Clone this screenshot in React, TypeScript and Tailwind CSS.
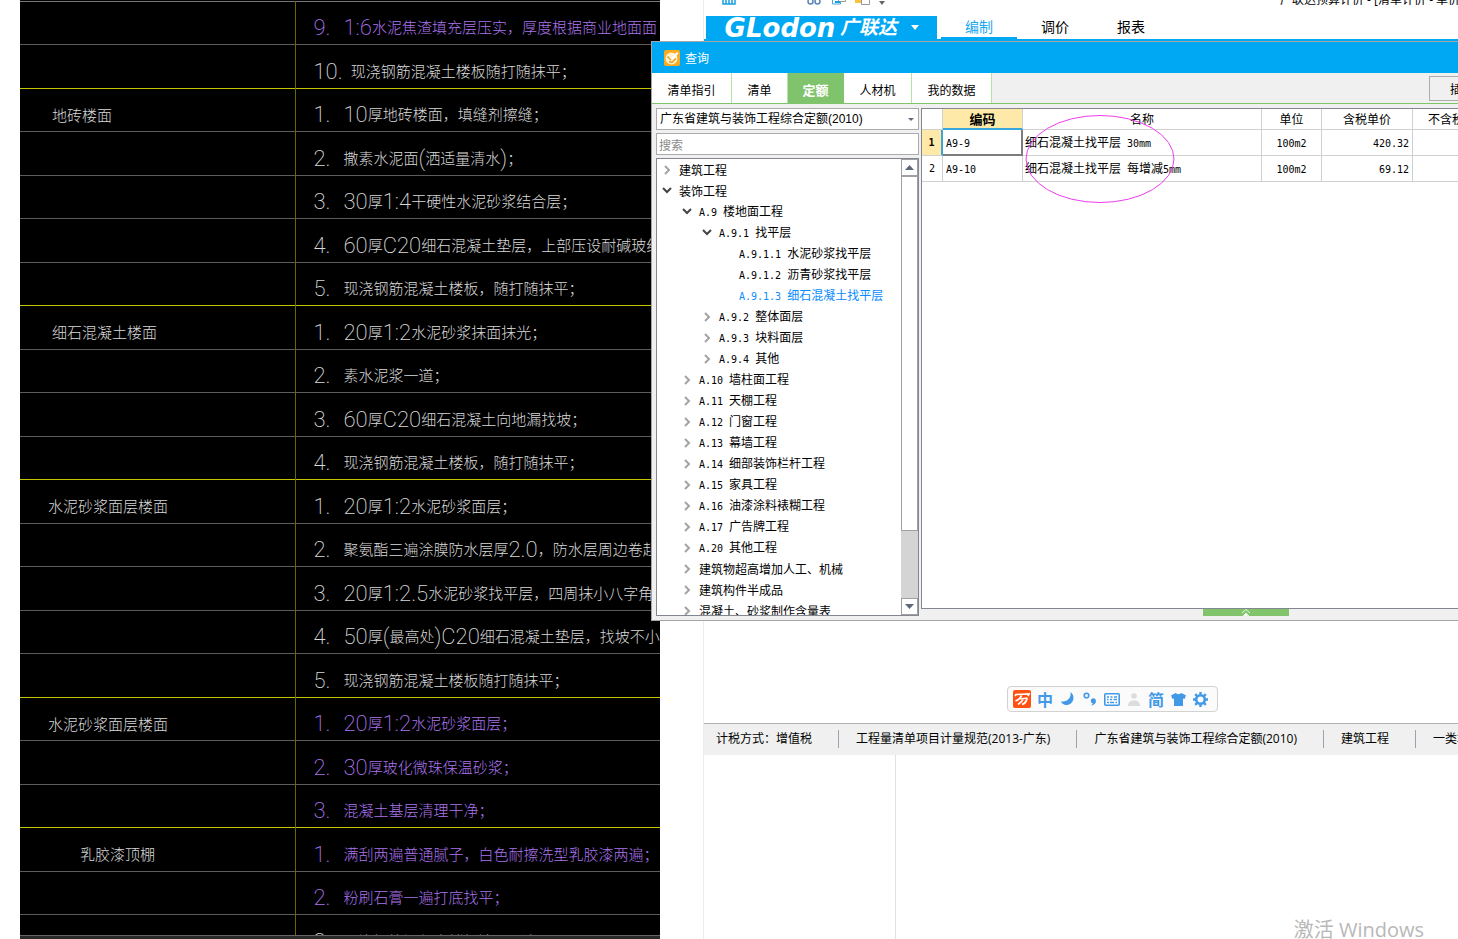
import { useState } from "react";
import { clsx } from "clsx";

type CadRow = {
  no: string;
  text: string;
  name?: string;
  namePad?: string;
  purple?: boolean;
  endsGroup?: boolean;
};

const cadRows: CadRow[] = [
  { no: "9.", text: "1:6水泥焦渣填充层压实，厚度根据商业地面面", purple: true },
  { no: "10.", text: "现浇钢筋混凝土楼板随打随抹平；", endsGroup: true },
  { no: "1.", text: "10厚地砖楼面，填缝剂擦缝；", name: "地砖楼面", namePad: "pl-8" },
  { no: "2.", text: "撒素水泥面(洒适量清水)；" },
  { no: "3.", text: "30厚1:4干硬性水泥砂浆结合层；" },
  { no: "4.", text: "60厚C20细石混凝土垫层，上部压设耐碱玻纤" },
  { no: "5.", text: "现浇钢筋混凝土楼板，随打随抹平；", endsGroup: true },
  { no: "1.", text: "20厚1:2水泥砂浆抹面抹光；", name: "细石混凝土楼面", namePad: "pl-8" },
  { no: "2.", text: "素水泥浆一道；" },
  { no: "3.", text: "60厚C20细石混凝土向地漏找坡；" },
  { no: "4.", text: "现浇钢筋混凝土楼板，随打随抹平；", endsGroup: true },
  { no: "1.", text: "20厚1:2水泥砂浆面层；", name: "水泥砂浆面层楼面", namePad: "pl-7" },
  { no: "2.", text: "聚氨酯三遍涂膜防水层厚2.0，防水层周边卷起" },
  { no: "3.", text: "20厚1:2.5水泥砂浆找平层，四周抹小八字角" },
  { no: "4.", text: "50厚(最高处)C20细石混凝土垫层，找坡不小" },
  { no: "5.", text: "现浇钢筋混凝土楼板随打随抹平；", endsGroup: true },
  { no: "1.", text: "20厚1:2水泥砂浆面层；", name: "水泥砂浆面层楼面", namePad: "pl-7", purple: true },
  { no: "2.", text: "30厚玻化微珠保温砂浆；", purple: true },
  { no: "3.", text: "混凝土基层清理干净；", purple: true, endsGroup: true },
  { no: "1.", text: "满刮两遍普通腻子，白色耐擦洗型乳胶漆两遍；", name: "乳胶漆顶棚", namePad: "pl-[60px]", purple: true },
  { no: "2.", text: "粉刷石膏一遍打底找平；", purple: true },
  { no: "3.", text: "现浇钢筋混凝土楼板清理干净" },
];

type TreeNode = { label: string; level: number; state?: "open" | "closed" };

const treeNodes: TreeNode[] = [
  { label: "建筑工程", level: 0, state: "closed" },
  { label: "装饰工程", level: 0, state: "open" },
  { label: "A.9 楼地面工程", level: 1, state: "open" },
  { label: "A.9.1 找平层", level: 2, state: "open" },
  { label: "A.9.1.1 水泥砂浆找平层", level: 3 },
  { label: "A.9.1.2 沥青砂浆找平层", level: 3 },
  { label: "A.9.1.3 细石混凝土找平层", level: 3 },
  { label: "A.9.2 整体面层", level: 2, state: "closed" },
  { label: "A.9.3 块料面层", level: 2, state: "closed" },
  { label: "A.9.4 其他", level: 2, state: "closed" },
  { label: "A.10 墙柱面工程", level: 1, state: "closed" },
  { label: "A.11 天棚工程", level: 1, state: "closed" },
  { label: "A.12 门窗工程", level: 1, state: "closed" },
  { label: "A.13 幕墙工程", level: 1, state: "closed" },
  { label: "A.14 细部装饰栏杆工程", level: 1, state: "closed" },
  { label: "A.15 家具工程", level: 1, state: "closed" },
  { label: "A.16 油漆涂料裱糊工程", level: 1, state: "closed" },
  { label: "A.17 广告牌工程", level: 1, state: "closed" },
  { label: "A.20 其他工程", level: 1, state: "closed" },
  { label: "建筑物超高增加人工、机械", level: 1, state: "closed" },
  { label: "建筑构件半成品", level: 1, state: "closed" },
  { label: "混凝土、砂浆制作含量表", level: 1, state: "closed" },
];

const levelPad = ["pl-1", "pl-6", "pl-11", "pl-16"];

const quotaRows = [
  { code: "A9-9", name: "细石混凝土找平层 30mm", unit: "100m2", price: "420.32" },
  { code: "A9-10", name: "细石混凝土找平层 每增减5mm", unit: "100m2", price: "69.12" },
];

const queryTabs = [
  { label: "清单指引", width: "w-20" },
  { label: "清单", width: "w-14" },
  { label: "定额", width: "w-14" },
  { label: "人材机", width: "w-[68px]" },
  { label: "我的数据", width: "w-20" },
];

const statusItems = [
  "计税方式：增值税",
  "工程量清单项目计量规范(2013-广东)",
  "广东省建筑与装饰工程综合定额(2010)",
  "建筑工程",
  "一类地区",
];

// Latin runs get their own face and size, Chinese keeps the parent's
function Mixed({ text, latin }: { text: string; latin: string }) {
  return (
    <>
      {text.split(/([\x20-\x7e]+)/).map((part, i) =>
        i % 2 === 1 ? (
          <span key={i} className={clsx("whitespace-pre", latin)}>
            {part}
          </span>
        ) : (
          part
        ),
      )}
    </>
  );
}

const monoLatin = "font-['DejaVu_Sans_Mono',monospace] text-[10px]";
const cadLatin = "align-[-2px] font-['Roboto',sans-serif] text-[22px] font-extralight";

function CadDrawing() {
  return (
    <section className="relative ml-5 w-[640px] shrink-0 overflow-hidden bg-black pt-px font-['Noto_Sans_CJK_SC',sans-serif] text-[15px] font-light">
      <table className="w-full table-fixed border-collapse">
        <colgroup>
          <col className="w-[275px]" />
          <col />
        </colgroup>
        <tbody>
          {cadRows.map((row, i) => (
            <tr
              key={i}
              className={clsx(
                "border-b odd:h-[43px] even:h-[44px]",
                i === 0 && "border-t border-t-[#777]",
                row.endsGroup ? "border-b-[#c4c400]" : "border-b-[#5c5c5c]",
              )}
            >
              <td
                className={clsx(
                  "border-r border-r-[#6b6700] p-0 pt-2 leading-none text-[#d8d8d8]",
                  row.namePad,
                )}
              >
                {row.name}
              </td>
              <td className="p-0">
                <div
                  className={clsx(
                    "h-[36px] overflow-hidden whitespace-nowrap pl-[18px] pt-[9px] leading-[26px]",
                    row.purple ? "text-[#ab74ec]" : "text-[#d8d8d8]",
                  )}
                >
                  <span className={clsx("inline-block min-w-[30px] pr-2", cadLatin)}>
                    {row.no}
                  </span>
                  <Mixed text={row.text} latin={cadLatin} />
                </div>
              </td>
            </tr>
          ))}
        </tbody>
      </table>
      <div className="absolute inset-x-0 bottom-0 h-1 border-t border-[#666] bg-[#2a2a2a]" />
    </section>
  );
}

function Chevron({ state }: { state?: "open" | "closed" }) {
  return (
    <span className="flex w-[18px] shrink-0 items-center pl-[1px]">
      {state === "closed" && (
        <svg width="10" height="10" viewBox="0 0 10 10" fill="none" stroke="#a3a3a3" strokeWidth="2">
          <path d="M3 1l4 4-4 4" />
        </svg>
      )}
      {state === "open" && (
        <svg width="10" height="10" viewBox="0 0 10 10" fill="none" stroke="#444" strokeWidth="2">
          <path d="M1 2l4 4 4-4" />
        </svg>
      )}
    </span>
  );
}

function QuotaTree() {
  const [selected, setSelected] = useState("A.9.1.3 细石混凝土找平层");
  return (
    <div className="flex min-h-0 flex-1 overflow-hidden border border-[#828790] bg-white">
      <ul className="min-w-0 flex-1 overflow-hidden">
        {treeNodes.map((node) => (
          <li key={node.label}>
            <button
              type="button"
              onClick={() => setSelected(node.label)}
              className={clsx(
                "flex h-[21px] w-full items-center whitespace-nowrap text-left",
                levelPad[node.level],
                selected === node.label && "text-[#0a8cff]",
              )}
            >
              <Chevron state={node.state} />
              <span>
                <Mixed text={node.label} latin={monoLatin} />
              </span>
            </button>
          </li>
        ))}
      </ul>
      <div className="flex w-[17px] flex-col bg-[#d4d4d4]">
        <button type="button" aria-label="向上" className="flex h-[17px] items-center justify-center border border-[#a0a0a0] bg-white">
          <svg width="9" height="5" viewBox="0 0 9 5"><path d="M4.500 0L9 5H0z" fill="#606878" /></svg>
        </button>
        <div className="h-[355px] border border-[#a0a0a0] bg-white" />
        <button type="button" aria-label="向下" className="mt-auto flex h-[17px] items-center justify-center border border-[#a0a0a0] bg-white">
          <svg width="9" height="5" viewBox="0 0 9 5"><path d="M0 0h9L4.500 5z" fill="#606878" /></svg>
        </button>
      </div>
    </div>
  );
}

function QuotaTable() {
  const cell = "border-b border-r border-[#d0d0d0] p-0";
  return (
    <div className="min-h-0 flex-1 overflow-hidden border border-r-0 border-[#828790] bg-white">
      <table className="w-[582px] table-fixed border-separate border-spacing-0 whitespace-nowrap">
        <colgroup>
          <col className="w-[21px]" />
          <col className="w-20" />
          <col className="w-[239px]" />
          <col className="w-[60px]" />
          <col className="w-[91px]" />
          <col className="w-[91px]" />
        </colgroup>
        <thead>
          <tr className="h-[21px]">
            <th className={cell} />
            <th className="border-b-2 border-r border-b-[#3ba6dc] border-r-[#d0d0d0] bg-[#ffe9a9] p-0 text-[13px] leading-none">编码</th>
            {["名称", "单位", "含税单价", "不含税单价"].map((h) => (
              <th key={h} className={clsx(cell, "font-normal leading-none")}>{h}</th>
            ))}
          </tr>
        </thead>
        <tbody>
          {quotaRows.map((row, i) => (
            <tr key={row.code} className="h-[26px]">
              <td
                className={clsx(
                  "p-0 text-center font-['DejaVu_Sans_Mono',monospace] text-[10px]",
                  i === 0
                    ? "border-b border-r-2 border-b-[#d0d0d0] border-r-[#3ba6dc] bg-[#ffe9a9] font-bold"
                    : "border-b border-r border-[#d0d0d0]",
                )}
              >
                {i + 1}
              </td>
              <td
                className={clsx(
                  "p-0 pl-[3px]",
                  i === 0
                    ? "border-b-2 border-r-2 border-[#7c7c7c]"
                    : "border-b border-r border-[#d0d0d0]",
                )}
              >
                <span className={monoLatin}>{row.code}</span>
              </td>
              <td className={clsx(cell, "pl-0.5")}>
                <Mixed text={row.name} latin={monoLatin} />
              </td>
              <td className={clsx(cell, "text-center")}>
                <span className={monoLatin}>{row.unit}</span>
              </td>
              <td className={clsx(cell, "pr-[3px] text-right")}>
                <span className={monoLatin}>{row.price}</span>
              </td>
              <td className={cell} />
            </tr>
          ))}
        </tbody>
      </table>
    </div>
  );
}

function QueryDialog() {
  const [tab, setTab] = useState("定额");
  return (
    <div className="absolute left-[651px] right-0 top-[41px] flex h-[580px] flex-col overflow-hidden border border-r-0 border-[#a5a5a5] bg-[#f0f0f0] text-xs">
      <header className="flex h-[31px] shrink-0 items-center gap-[5px] bg-[#00a8f3] pl-3 text-white">
        <svg width="16" height="16" viewBox="0 0 16 16">
          <rect width="16" height="16" rx="2" fill="#fbab1d" />
          <circle cx="7.500" cy="8.500" r="6" fill="#fff3d0" />
          <path d="M3.500 6.500l3 3L13.500 3M5 11.500l3 1 4-4" fill="none" stroke="#f39a12" strokeWidth="1.500" />
          <path d="M6 8.500L13 2l1.500 1.500L8 10z" fill="#fff" />
        </svg>
        <h1>查询</h1>
      </header>
      <nav className="flex h-[31px] shrink-0 border-b border-[#7fc36c]">
        {queryTabs.map((t) => (
          <button
            key={t.label}
            type="button"
            onClick={() => setTab(t.label)}
            className={clsx(
              "border-r pt-1",
              t.width,
              t.label === tab
                ? "border-[#7fc36c] bg-[#7fc36c] text-[13px] font-bold text-white"
                : "border-[#b5e3a5] bg-white",
            )}
          >
            {t.label}
          </button>
        ))}
        <button type="button" className="mt-[3px] ml-auto h-[25px] w-[29px] overflow-hidden whitespace-nowrap border border-r-0 border-[#adadad] pl-5 text-left">
          插入
        </button>
      </nav>
      <div className="flex min-h-0 flex-1 gap-0.5 pl-1 pt-1">
        <div className="flex w-[263px] shrink-0 flex-col gap-[3px] pb-1">
          <div className="relative h-[22px] shrink-0">
            <select
              aria-label="定额库"
              className="h-full w-full appearance-none border border-[#ababab] bg-white pl-[3px] font-['Liberation_Sans','Noto_Sans_CJK_SC',sans-serif]"
            >
              <option>广东省建筑与装饰工程综合定额(2010)</option>
            </select>
            <svg className="pointer-events-none absolute right-[5px] top-[10px]" width="6" height="3" viewBox="0 0 6 3">
              <path d="M0 0h6L3 3z" fill="#606878" />
            </svg>
          </div>
          <input
            aria-label="搜索"
            placeholder="搜索"
            className="h-[22px] shrink-0 border border-[#ababab] bg-white px-0.5 placeholder:text-[#8a8a8a]"
          />
          <QuotaTree />
        </div>
        <div className="flex min-w-0 flex-1 flex-col">
          <QuotaTable />
          <div className="h-[11px] shrink-0 pl-[282px]">
            <button type="button" aria-label="展开" className="flex h-[7px] w-[86px] items-center justify-center bg-[#82c46c]">
              <svg width="10" height="7" viewBox="0 0 10 7" fill="none" stroke="#fff">
                <path d="M1 4l4-3.500L9 4M2 7l3-3 3 3" strokeOpacity=".8" />
                <path d="M3.500 7L5 5l1.500 2z" fill="#fff" />
              </svg>
            </button>
          </div>
        </div>
      </div>
      {/* hand-drawn markup around the matching quotas */}
      <svg className="pointer-events-none absolute left-[373px] top-[72px]" width="150" height="90" viewBox="0 0 150 90">
        <ellipse cx="75" cy="45" rx="74" ry="43.500" fill="none" stroke="#ee3cee" />
      </svg>
    </div>
  );
}

function ImeBar() {
  const item = "flex w-[22px] items-center justify-center";
  return (
    <div className="absolute left-[1007px] top-[686px] flex h-[26px] w-[211px] items-center rounded border border-[#d2d2d2] bg-[#fbfbfb] pl-[3px] text-[16px] font-bold leading-none text-[#4199e8]">
      <span className={item}>
        <svg width="18" height="18" viewBox="0 0 18 18">
          <rect width="18" height="18" rx="2" fill="#ff5212" />
          <path d="M2 6l1-1.500 13-.5-1 2M8.500 5.500C7.500 8.500 5.500 10 2.500 11M7.500 9l7-1M10.500 8.500c-1 2.500-3 4.500-5.500 6M14 8.500c-.5 3-2 5-5 6" fill="none" stroke="#fff" strokeWidth="1.700" />
        </svg>
      </span>
      <span className="flex w-6 items-center justify-center">中</span>
      <span className={item}>
        <svg width="14" height="14" viewBox="0 0 14 14" fill="currentColor">
          <path d="M9.500 0c5 3.500 3.500 12-3 13C3.500 13.500 1 12 0 9.500c6 .5 10.500-3.500 9.500-9.500z" />
        </svg>
      </span>
      <span className={item}>
        <svg width="14" height="14" viewBox="0 0 14 14" fill="currentColor">
          <circle cx="3.500" cy="3.500" r="2.300" fill="none" stroke="currentColor" strokeWidth="1.600" />
          <circle cx="10.300" cy="8.800" r="2.500" />
          <path d="M12.800 8.500c.2 3-1.500 4.700-4.800 5 1.300-.8 1.800-1.800 2-3z" />
        </svg>
      </span>
      <span className={item}>
        <svg width="16" height="13" viewBox="0 0 16 13">
          <rect x=".8" y=".8" width="14.400" height="11.400" rx="1" fill="#fff" stroke="currentColor" strokeWidth="1.600" />
          <path d="M3 4h2M6.500 4h2M10 4h3M3 6.500h1.500M6 6.500h2M9.500 6.500h3.500M3 9.500h2M6 9.500h4M11.500 9.500H13" stroke="currentColor" strokeWidth="1.500" />
        </svg>
      </span>
      <span className={item}>
        <svg width="12" height="13" viewBox="0 0 12 13" fill="#dcdcdc">
          <circle cx="6" cy="3" r="2.800" />
          <path d="M0 13c0-3.500 2-5.500 6-5.500s6 2 6 5.500z" />
        </svg>
      </span>
      <span className={item}>简</span>
      <span className={item}>
        <svg width="15" height="13" viewBox="0 0 15 13" fill="currentColor">
          <path d="M4.500 0c1.500 1.500 4.500 1.500 6 0L15 2.500 13.500 6 12 5.500V13H3V5.500L1.500 6 0 2.500z" />
        </svg>
      </span>
      <span className={item}>
        <svg width="15" height="15" viewBox="0 0 15 15" fill="none" stroke="currentColor">
          <circle cx="7.500" cy="7.500" r="4.300" strokeWidth="2.600" />
          <path d="M7.500 0v2.500M7.500 12.500V15M0 7.500h2.500M12.500 7.500H15M2.200 2.200L4 4M11 11l1.800 1.800M2.200 12.800L4 11M11 4l1.800-1.800" strokeWidth="2.400" />
        </svg>
      </span>
    </div>
  );
}

function BudgetApp() {
  return (
    <main className="ml-[43px] flex min-w-0 flex-1 flex-col overflow-hidden border-l border-[#ececec] font-['Open_Sans','Noto_Sans_CJK_SC',sans-serif]">
      <div className="flex h-4 shrink-0 items-start">
        <div className="flex h-[9px] flex-1 items-end gap-[9px] overflow-hidden pb-1 pl-[18px]">
          <svg width="14" height="14" viewBox="0 0 14 14" fill="none" stroke="#18a0e0" strokeWidth="1.500">
            <path d="M1 1h12v12H1zM4 8h6v5H4zM7 9v4" />
          </svg>
          <svg className="ml-[62px]" width="14" height="14" viewBox="0 0 14 14" fill="none" stroke="#5b84b8" strokeWidth="1.500">
            <circle cx="3.500" cy="10.500" r="2.500" />
            <circle cx="10.500" cy="10.500" r="2.500" />
            <path d="M4 8l6-8M10 8L4 0" />
          </svg>
          <svg className="ml-0.5" width="14" height="14" viewBox="0 0 14 14" fill="#fff">
            <path d="M.5 0h8v13h-8z" stroke="#48a8e0" />
            <path d="M6.500 3.500h7v7h-7z" stroke="#999" />
            <path d="M3 11h5" stroke="#18a0e0" strokeWidth="2" />
          </svg>
          <svg width="15" height="14" viewBox="0 0 15 14">
            <path d="M0 0h9v12H0z" fill="#fbc33c" />
            <path d="M6.500 5.500h8v8h-8z" fill="#fff" stroke="#999" />
          </svg>
          <svg width="6" height="4" viewBox="0 0 6 4"><path d="M0 0h6L3 4z" fill="#666" /></svg>
        </div>
        <div className="flex h-2 w-[178px] shrink-0 items-end overflow-hidden whitespace-nowrap text-xs leading-4">
          广联达预算计价 - [清单计价 - 单价
        </div>
      </div>
      <div className="flex h-[25px] shrink-0 border-b-2 border-[#00a8f3] pl-0.5">
        <button type="button" className="mr-1 flex h-full w-[231px] shrink-0 items-center bg-[#00a8f3] pl-[14px] leading-none text-white">
          <span className="w-[120px] font-['DejaVu_Sans',sans-serif] text-[26px] font-bold italic leading-none">GLodon</span>
          <span className="text-[19px] font-bold italic leading-none">广联达</span>
          <svg className="ml-3.5" width="8" height="5" viewBox="0 0 8 5"><path d="M0 0h8L4 5z" fill="#fff" /></svg>
        </button>
        {["编制", "调价", "报表"].map((label, i) => (
          <button
            key={label}
            type="button"
            className={clsx(
              "w-[76px] text-sm leading-[21px]",
              i === 0 ? "border-b-2 border-[#00a8f3] text-[#18a8f0]" : "border-b-2 border-transparent",
            )}
          >
            {label}
          </button>
        ))}
      </div>
      <div className="h-[682px] shrink-0" />
      <footer className="flex h-8 shrink-0 items-center overflow-hidden whitespace-nowrap border-t border-[#b0b0b0] bg-[#f0f0f0] pb-0.5 pl-3 text-xs">
        {statusItems.map((item, i) => (
          <span key={item} className={clsx("flex shrink-0 items-center", i > 0 && "pl-[17px]")}>
            {item}
            <span className="ml-[26px] h-[18px] border-l border-[#9aa4ae]" />
          </span>
        ))}
      </footer>
      <div className="ml-[191px] flex-1 border-l border-[#e2e2e2] bg-white" />
    </main>
  );
}

export default function App() {
  return (
    <div className="relative flex h-screen overflow-hidden bg-white font-['Noto_Sans_CJK_SC',sans-serif] text-black">
      <CadDrawing />
      <BudgetApp />
      <QueryDialog />
      <ImeBar />
      <div className="absolute bottom-[-6px] right-[34px] font-['Open_Sans','Noto_Sans_CJK_SC',sans-serif] text-xl leading-[30px] text-[#b8b8b8]">
        激活 Windows
      </div>
    </div>
  );
}
